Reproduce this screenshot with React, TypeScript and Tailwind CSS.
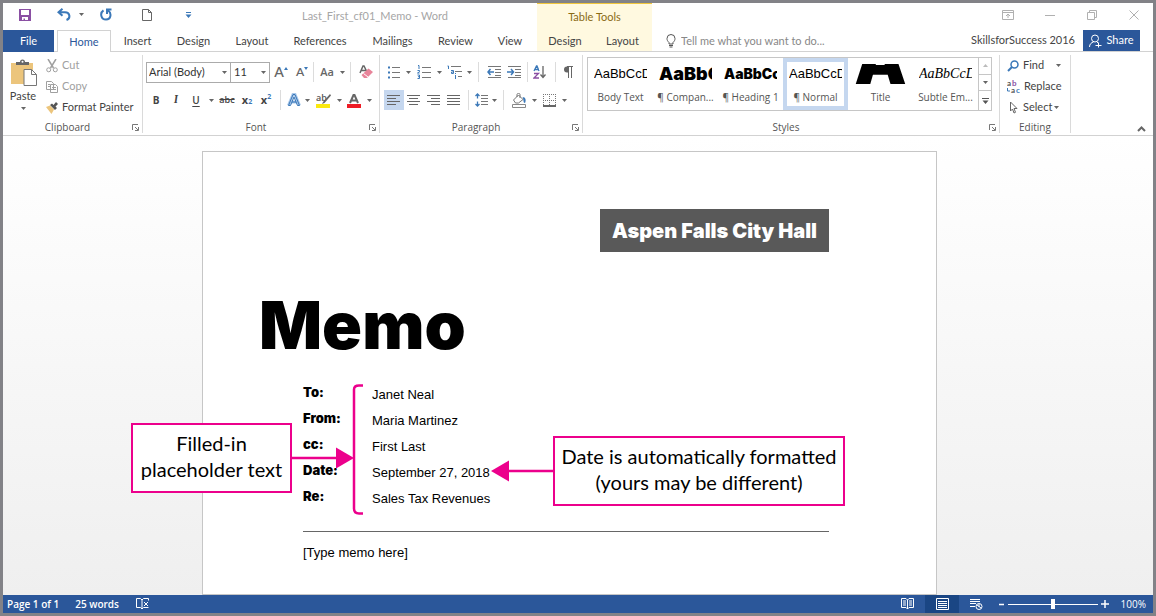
import type { ReactNode } from "react";

const cx = (...parts: (string | undefined)[]) => parts.filter(Boolean).join(" ");

function Caret({ className = "w-1.5" }: { className?: string }) {
  return (
    <span className={cx("flex shrink-0 items-center justify-center", className)}>
      <svg width="5" height="3" viewBox="0 0 5 3" aria-hidden="true">
        <path d="M0 0h5L2.5 3z" fill="#666" />
      </svg>
    </span>
  );
}

function Sep({ className }: { className: string }) {
  return (
    <span className={cx("flex h-5 shrink-0 justify-center", className)}>
      <span className="h-full w-px bg-[#dcdcdc]" />
    </span>
  );
}

function Tool({ label, className, children }: { label: string; className: string; children: ReactNode }) {
  return (
    <button type="button" aria-label={label} className={cx("flex h-5 shrink-0 items-center justify-center text-[#444]", className)}>
      {children}
    </button>
  );
}

function Group({ name, className, launcher, children }: { name: string; className: string; launcher?: boolean; children: ReactNode }) {
  return (
    <section aria-label={name} className={cx("flex shrink-0 flex-col border-r border-[#dadada]", className)}>
      <div className="h-[66px]">{children}</div>
      <div className="flex h-3 items-center font-['Open_Sans',sans-serif] text-[10px] leading-3 text-[#555]">
        <span className="grow text-center">{name}</span>
        {launcher && (
          <button type="button" aria-label={name + " options"} className="mr-[3px] block">
            <svg width="7" height="7" viewBox="0 0 7 7" fill="none" stroke="#777" aria-hidden="true">
              <path d="M.5 6V.5H6M3 3l3 3M6.5 3v3.5H3" />
            </svg>
          </button>
        )}
      </div>
    </section>
  );
}

function Lines({ rows }: { rows: [number, number][] }) {
  return (
    <svg width="14" height="12" viewBox="0 0 14 12" stroke="#666" aria-hidden="true">
      {rows.map(([a, b], i) => (
        <path key={i} d={`M${a} ${i * 3 + 1.5}H${b}`} />
      ))}
    </svg>
  );
}

const tabs = [
  { name: "Insert", w: "w-[53px]" },
  { name: "Design", w: "w-[59px]" },
  { name: "Layout", w: "w-[58px]" },
  { name: "References", w: "w-[78px]" },
  { name: "Mailings", w: "w-[67px]" },
  { name: "Review", w: "w-[59px]" },
  { name: "View", w: "w-[50px]" },
];

function Header() {
  return (
    <header className="flex h-[49px] shrink-0 text-[11px] text-[#444]">
      <div className="flex w-[534px] shrink-0 flex-col">
        <div className="flex h-[27px] items-center">
          <div className="flex items-center pb-1">
            <button type="button" aria-label="Save" className="ml-4">
              <svg width="12" height="12" viewBox="0 0 12 12" aria-hidden="true">
                <path d="M0 0h12v12H0zM2 1v5h8V1zM3 8v3h1.500V9.500H6V11h3V8z" fill="#8a4fa3" fillRule="evenodd" />
              </svg>
            </button>
            <button type="button" aria-label="Undo" className="ml-[26px]">
              <svg width="14" height="13" viewBox="0 0 14 13" fill="none" stroke="#3b78b8" strokeWidth="2" aria-hidden="true">
                <path d="M5.500 .8L1.500 4.300l4 3.500M2 4.300h6c5 0 6 6 1.500 7.700" />
              </svg>
            </button>
            <Caret className="ml-[6px] w-2" />
            <button type="button" aria-label="Redo" className="ml-[15px]">
              <svg width="12" height="13" viewBox="0 0 12 13" fill="none" stroke="#3b78b8" strokeWidth="2" aria-hidden="true">
                <path d="M3.500 2.300C-.5 5 1 11.500 6 11.500S12 5 8 2.500M7 6V1.500h4.500" />
              </svg>
            </button>
            <button type="button" aria-label="New document" className="ml-[30px]">
              <svg width="10" height="12" viewBox="0 0 10 12" fill="none" stroke="#666" aria-hidden="true">
                <path d="M.5.5h6l3 3v8h-9zM6.500.5v3h3" />
              </svg>
            </button>
            <button type="button" aria-label="Customize toolbar" className="ml-[33px]">
              <svg width="7" height="6" viewBox="0 0 7 6" fill="#3b78b8" aria-hidden="true">
                <path d="M1 0h5v1H1zM.5 2.500h6L3.500 6z" />
              </svg>
            </button>
          </div>
          <h1 className="ml-[110px] whitespace-nowrap text-[#a6a6a6]">Last_First_cf01_Memo - Word</h1>
        </div>
        <nav className="flex h-[22px] items-stretch leading-5">
          <button type="button" className="w-[51px] bg-[#2b579a] text-white">File</button>
          <span className="w-[3px] border-b border-[#d2d2d2]" />
          <button type="button" className="w-[54px] border border-b-0 border-[#d2d2d2] text-[#2b579a]">Home</button>
          {tabs.map((t) => (
            <button type="button" key={t.name} className={cx("shrink-0 border-b border-[#d2d2d2]", t.w)}>
              {t.name}
            </button>
          ))}
          <span className="grow border-b border-[#d2d2d2]" />
        </nav>
      </div>
      <div className="flex w-[115px] shrink-0 flex-col border-t border-[#f0c63c] bg-[#fff9e0]">
        <div className="flex h-[26px] items-center justify-center text-[#8a6a14]">Table Tools</div>
        <div className="flex h-[22px] border-b border-[#d2d2d2] leading-5">
          <button type="button" className="w-[56px]">Design</button>
          <button type="button" className="w-[59px]">Layout</button>
        </div>
      </div>
      <div className="flex grow flex-col">
        <div className="flex h-[27px] items-center justify-end pr-[14px] pb-1">
          <button type="button" aria-label="Ribbon display options">
            <svg width="12" height="10" viewBox="0 0 12 10" fill="none" stroke="#b0b0b0" aria-hidden="true">
              <path d="M.5.5h11v9H.5zM.5 2.500h11M6 8V4M4 6l2-2 2 2" />
            </svg>
          </button>
          <button type="button" aria-label="Minimize" className="ml-[31px]">
            <svg width="10" height="10" viewBox="0 0 10 10" stroke="#b0b0b0" aria-hidden="true"><path d="M0 5.500h10" /></svg>
          </button>
          <button type="button" aria-label="Restore" className="ml-8">
            <svg width="10" height="10" viewBox="0 0 10 10" fill="none" stroke="#b0b0b0" aria-hidden="true">
              <path d="M.5 2.500h7v7h-7zM2.500 2.500v-2h7v7h-2" />
            </svg>
          </button>
          <button type="button" aria-label="Close" className="ml-8">
            <svg width="10" height="10" viewBox="0 0 10 10" stroke="#b0b0b0" aria-hidden="true"><path d="M.5.5l9 9M9.500.5l-9 9" /></svg>
          </button>
        </div>
        <div className="flex h-[22px] items-center border-b border-[#d2d2d2]">
          <svg className="ml-[14px] shrink-0" width="10" height="14" viewBox="0 0 10 14" fill="none" stroke="#555" aria-hidden="true">
            <path d="M3 10V8.500C1.500 7 1 6 1 4.500a4 4 0 0 1 8 0C9 6 8.500 7 7 8.500V10zM3 11.500h4M3.500 13h3" />
          </svg>
          <label className="flex grow">
            <span className="sr-only">Tell me</span>
            <input className="ml-[5px] h-5 w-full bg-transparent outline-none placeholder:text-[#888]" placeholder="Tell me what you want to do..." />
          </label>
          <span className="mr-2 whitespace-nowrap">SkillsforSuccess 2016</span>
          <button type="button" className="mr-[13px] flex h-[21px] w-[57px] shrink-0 items-center justify-center gap-1 bg-[#2b579a] text-white">
            <svg width="13" height="14" viewBox="0 0 13 14" fill="none" stroke="#fff" aria-hidden="true">
              <circle cx="6" cy="4.500" r="3.500" />
              <path d="M.5 13c0-3 2-4.500 4-5M8 8l1 1M6.500 11.500h6M9.500 8.500v5" />
            </svg>
            Share
          </button>
        </div>
      </div>
    </header>
  );
}

function Clipboard() {
  const row = "flex h-[21px] items-center gap-1 whitespace-nowrap";
  return (
    <Group name="Clipboard" className="w-[140px]" launcher>
      <div className="flex text-[11px] text-[#444]">
        <button type="button" className="flex w-10 flex-col items-center pt-1">
          <svg width="27" height="28" viewBox="0 0 27 28" aria-hidden="true">
            <path d="M1 4h22v21H1z" fill="#ecc57c" />
            <path d="M6 6V3h4a2.500 2.500 0 0 1 5 0h4v3z" fill="#666" />
            <circle cx="12.500" cy="2.800" r="1" fill="#fff" />
            <path d="M14 10.500h7.500l5 5v11H14z" fill="#fff" stroke="#777" />
            <path d="M21.500 10.500v5h5" fill="none" stroke="#777" />
          </svg>
          <span className="mt-px leading-4">Paste</span>
          <Caret className="h-2 w-2" />
        </button>
        <div className="flex flex-col pl-[3px]">
          <button type="button" className={cx(row, "text-[#a0a0a0]")}>
            <svg width="12" height="14" viewBox="0 0 12 14" fill="none" stroke="#a0a0a0" aria-hidden="true">
              <path d="M2 0l5.500 9M10 0L4.500 9" strokeWidth="1.500" />
              <circle cx="2.700" cy="10.800" r="2" />
              <circle cx="9.300" cy="10.800" r="2" />
            </svg>
            Cut
          </button>
          <button type="button" className={cx(row, "text-[#a0a0a0]")}>
            <svg width="12" height="12" viewBox="0 0 12 12" fill="#fff" stroke="#a0a0a0" aria-hidden="true">
              <path d="M.5.5h5l2 2v6h-7zM4.500 3.500h5l2 2v6h-7z" />
              <path d="M2 3.500h2M2 5.500h2M6 6.500h4M6 8.500h4" />
            </svg>
            Copy
          </button>
          <button type="button" className={row}>
            <svg width="12" height="12" viewBox="0 0 12 12" aria-hidden="true">
              <path d="M0 5l4-1.500 4 4L5.500 12z" fill="#ecc57c" />
              <path d="M4 3l2-1.500L7.500 3 10 0l2 2-2.500 2.500L11 6 9 8z" fill="#555" />
            </svg>
            Format Painter
          </button>
        </div>
      </div>
    </Group>
  );
}

function FontGroup() {
  return (
    <Group name="Font" className="w-[237px]" launcher>
      <div className="flex flex-col gap-2 pt-[7px] pl-[3px] text-[11px]">
        <div className="flex h-5 items-center">
          <label className="relative flex h-[21px] w-[85px] border border-[#ababab]">
            <span className="sr-only">Font name</span>
            <select className="w-full appearance-none bg-transparent pl-0.5 text-[#333] outline-none"><option>Arial (Body)</option></select>
            <Caret className="absolute top-2 right-[3px]" />
          </label>
          <label className="relative flex h-[21px] w-[39px] border border-l-0 border-[#ababab]">
            <span className="sr-only">Font size</span>
            <select className="w-full appearance-none bg-transparent pl-[3px] text-[#333] outline-none"><option>11</option></select>
            <Caret className="absolute top-2 right-[3px]" />
          </label>
          <Tool label="Grow font" className="w-[22px] text-sm font-semibold text-[#666]">
            A<svg className="mb-2" width="4" height="3" viewBox="0 0 4 3"><path d="M0 3h4L2 0z" fill="#3b78b8" /></svg>
          </Tool>
          <Tool label="Shrink font" className="w-5 text-xs font-semibold text-[#666]">
            A<svg className="mb-2" width="4" height="3" viewBox="0 0 4 3"><path d="M0 0h4L2 3z" fill="#3b78b8" /></svg>
          </Tool>
          <Sep className="w-[3px]" />
          <Tool label="Change case" className="w-6 font-['Open_Sans',sans-serif] font-semibold text-[#666]">Aa</Tool>
          <Caret />
          <Sep className="w-2.5" />
          <Tool label="Clear formatting" className="w-[22px]">
            <svg width="14" height="14" viewBox="0 0 14 14" aria-hidden="true">
              <path d="M1 8L4 1h1l3 6M2.500 5.500h4" fill="none" stroke="#666" strokeWidth="1.500" />
              <path d="M9.500 3.500L14 7l-6 6H5L2.500 10z" fill="#e8849a" />
              <path d="M4.500 8.500L9 12" stroke="#fff" />
            </svg>
          </Tool>
        </div>
        <div className="flex h-5 items-center font-['Open_Sans',sans-serif]">
          <Tool label="Bold" className="w-5 text-[10px] font-bold">B</Tool>
          <Tool label="Italic" className="w-5 font-serif font-bold italic">I</Tool>
          <Tool label="Underline" className="w-5 text-[10px] font-semibold underline underline-offset-2">U</Tool>
          <Caret className="w-2.5" />
          <Tool label="Strikethrough" className="w-[22px] text-[9px] font-semibold line-through">abc</Tool>
          <Tool label="Subscript" className="w-[18px] font-bold">x<sub className="text-[7px] text-[#3b78b8]">2</sub></Tool>
          <Tool label="Superscript" className="w-5 font-bold">x<sup className="text-[7px] text-[#3b78b8]">2</sup></Tool>
          <Sep className="w-2" />
          <Tool label="Text effects" className="w-5">
            <svg width="14" height="14" viewBox="0 0 14 14" fill="none" aria-hidden="true">
              <path d="M1.500 12.500L6 1.500h2l4.500 11M4 9h6" stroke="#a9c8ea" strokeWidth="3" />
              <path d="M1.500 12.500L6 1.500h2l4.500 11h-2L7 4l-3.500 8.500zM5 9h4" stroke="#3b78b8" />
            </svg>
          </Tool>
          <Caret />
          <Tool label="Highlight color" className="w-[26px]">
            <svg width="15" height="15" viewBox="0 0 15 15" aria-hidden="true">
              <text x="0" y="8" fontSize="9" fontWeight="600" fill="#555">ab</text>
              <path d="M14 1L7 9l-1 2 2.500-1L15 2.500z" fill="#666" />
              <path d="M0 11h14v4H0z" fill="#fbe90e" />
            </svg>
          </Tool>
          <Caret />
          <Tool label="Font color" className="w-6">
            <svg width="14" height="15" viewBox="0 0 14 15" aria-hidden="true">
              <path d="M3 10L6.500 2h1L11 10M4.500 7.500h5" fill="none" stroke="#666" strokeWidth="2" />
              <path d="M0 11h14v4H0z" fill="#ee1c25" />
            </svg>
          </Tool>
          <Caret />
        </div>
      </div>
    </Group>
  );
}

function Paragraph() {
  return (
    <Group name="Paragraph" className="w-[203px]" launcher>
      <div className="flex flex-col gap-2 pt-[7px] pl-1">
        <div className="flex h-5 items-center">
          <Tool label="Bullets" className="w-5">
            <svg width="14" height="14" viewBox="0 0 14 14" aria-hidden="true">
              <path d="M5 2.500h8M5 7.500h8M5 12.500h8" stroke="#777" />
              <path d="M1 1.500h2v2H1zM1 6.500h2v2H1zM1 11.500h2v2H1z" fill="#3b78b8" />
            </svg>
          </Tool>
          <Caret className="w-2" />
          <Tool label="Numbering" className="w-6">
            <svg width="14" height="14" viewBox="0 0 14 14" aria-hidden="true">
              <path d="M5 2.500h9M5 7.500h9M5 12.500h9" stroke="#777" />
              <path d="M1 .5h1V4M.5 5.500h2v1.300l-2 1.200h2M.5 10h2v3.500h-2M1 11.700h1.500" fill="none" stroke="#3b78b8" />
            </svg>
          </Tool>
          <Caret />
          <Tool label="Multilevel list" className="w-6">
            <svg width="15" height="14" viewBox="0 0 15 14" aria-hidden="true">
              <path d="M4 1.500h10M8 6.500h7M11 11.500h4" stroke="#777" />
              <path d="M.5 1h1v3M4 5.500h2.500v3H4.500V7h2M8.500 10v4M8.500 8v1" fill="none" stroke="#3b78b8" />
            </svg>
          </Tool>
          <Caret />
          <Sep className="w-3" />
          <Tool label="Decrease indent" className="w-5">
            <svg width="15" height="12" viewBox="0 0 15 12" aria-hidden="true">
              <path d="M1 .5h13M8 3.500h6M8 6.500h6M8 9.500h6M1 11.500h13" stroke="#777" />
              <path d="M3.500 3L1 6l2.500 3M1 6h6" fill="none" stroke="#3b78b8" strokeWidth="1.500" />
            </svg>
          </Tool>
          <Tool label="Increase indent" className="w-5">
            <svg width="15" height="12" viewBox="0 0 15 12" aria-hidden="true">
              <path d="M1 .5h13M8 3.500h6M8 6.500h6M8 9.500h6M1 11.500h13" stroke="#777" />
              <path d="M4 3l2.500 3L4 9M0 6h6" fill="none" stroke="#3b78b8" strokeWidth="1.500" />
            </svg>
          </Tool>
          <Sep className="w-1.5" />
          <Tool label="Sort" className="w-5">
            <svg width="14" height="14" viewBox="0 0 14 14" fill="none" aria-hidden="true">
              <path d="M1 6l2.500-5h.5l2 5M2 4.500h4" stroke="#3b78b8" strokeWidth="1.300" />
              <path d="M1 8.500h4.500L1 13h5" stroke="#8a4fa3" strokeWidth="1.300" />
              <path d="M10 1v11M7.500 9.500L10 12.500l2.500-3" stroke="#666" strokeWidth="1.300" />
            </svg>
          </Tool>
          <Sep className="w-2.5" />
          <Tool label="Show formatting marks" className="w-4">
            <svg width="10" height="12" viewBox="0 0 10 12" aria-hidden="true">
              <path d="M5 .5H4a3 3 0 0 0 0 6h1z" fill="#666" />
              <path d="M4 .5h6M5.500.5V12M8.500.5V12" stroke="#666" />
            </svg>
          </Tool>
        </div>
        <div className="flex h-5 items-center">
          <Tool label="Align left" className="w-5 bg-[#c5d7ef]"><Lines rows={[[0, 13], [0, 9], [0, 13], [0, 9]]} /></Tool>
          <Tool label="Center" className="w-5"><Lines rows={[[0, 13], [2, 11], [0, 13], [2, 11]]} /></Tool>
          <Tool label="Align right" className="w-5"><Lines rows={[[0, 13], [4, 13], [0, 13], [4, 13]]} /></Tool>
          <Tool label="Justify" className="w-5"><Lines rows={[[0, 13], [0, 13], [0, 13], [0, 13]]} /></Tool>
          <Sep className="w-2" />
          <Tool label="Line spacing" className="w-[18px]">
            <svg width="13" height="14" viewBox="0 0 13 14" fill="none" aria-hidden="true">
              <path d="M6 2.500h7M6 5.500h7M6 8.500h7M6 11.500h7" stroke="#777" />
              <path d="M2.500 1v4.500M.5 3l2-2 2 2M2.500 8.500V13M.5 11l2 2 2-2" stroke="#3b78b8" strokeWidth="1.300" />
            </svg>
          </Tool>
          <Caret className="w-2" />
          <Sep className="w-2.5" />
          <Tool label="Shading" className="w-[22px]">
            <svg width="15" height="15" viewBox="0 0 15 15" fill="none" aria-hidden="true">
              <path d="M1.500 7l5-5 4.500 4.500L6.500 10h-3zM5 4V1.500C5 0 8 0 8 1.500V5" stroke="#777" />
              <path d="M10.500 4c3 0 4 3 2.500 6-2 0-1-3-2.500-6z" fill="#3b78b8" />
              <path d="M.5 11.500h13v3H.5z" stroke="#888" />
            </svg>
          </Tool>
          <Caret className="w-2" />
          <Tool label="Borders" className="w-[22px]">
            <svg width="13" height="13" viewBox="0 0 13 13" stroke="#777" aria-hidden="true">
              <path d="M0 .5h13M0 6.500h13M.5 0v12M6.500 0v12M12.500 0v12" strokeDasharray="1 1" />
              <path d="M0 12h13" strokeWidth="2" stroke="#666" />
            </svg>
          </Tool>
          <Caret className="w-2" />
        </div>
      </div>
    </Group>
  );
}

const sample = "block h-5 w-[53px] overflow-hidden whitespace-nowrap leading-5 text-black";
const heavy = "font-['Inter',sans-serif] font-black";

const styles: { name: string; selected?: boolean; preview: ReactNode }[] = [
  { name: "Body Text", preview: <span className={cx(sample, "font-['Liberation_Sans',sans-serif] text-[13px]")}>AaBbCcD</span> },
  { name: "¶ Compan...", preview: <span className={cx(sample, heavy, "text-lg leading-5")}>AaBbC</span> },
  { name: "¶ Heading 1", preview: <span className={cx(sample, heavy, "text-sm leading-5")}>AaBbCc</span> },
  { name: "¶ Normal", selected: true, preview: <span className={cx(sample, "font-['Liberation_Sans',sans-serif] text-[13px]")}>AaBbCcD</span> },
  {
    name: "Title",
    preview: (
      <span className={cx(heavy, "flex h-5 w-[52px] flex-col items-center justify-end overflow-hidden text-black")}>
        <span className="text-[66px] leading-[48px]">A</span>
      </span>
    ),
  },
  { name: "Subtle Em...", preview: <span className={cx(sample, "font-['Liberation_Serif',serif] text-sm italic text-[#444]")}>AaBbCcD</span> },
];

function StylesGroup() {
  return (
    <Group name="Styles" className="w-[417px]" launcher>
      <div className="pt-0.5 pr-[7px] pl-1">
        <div className="flex h-[54px] border border-[#c6c6c6]">
          {styles.map((s) => (
            <button
              type="button"
              key={s.name}
              className={cx(
                "flex w-[65px] shrink-0 flex-col items-center justify-center gap-[5px] border-4 font-['Open_Sans',sans-serif] text-[10px] leading-4 text-[#555]",
                s.selected ? "border-[#c5d7ef]" : "border-transparent",
              )}
            >
              {s.preview}
              <span className="whitespace-nowrap">{s.name}</span>
            </button>
          ))}
          <div className="flex grow flex-col border-l border-[#c6c6c6]">
            <button type="button" aria-label="Scroll up" className="flex grow items-center justify-center">
              <svg width="5" height="3" viewBox="0 0 5 3"><path d="M0 3h5L2.500 0z" fill="#bbb" /></svg>
            </button>
            <button type="button" aria-label="Scroll down" className="flex grow items-center justify-center border-t border-[#c6c6c6]"><Caret /></button>
            <button type="button" aria-label="More styles" className="flex grow items-center justify-center border-t border-[#c6c6c6]">
              <svg width="7" height="6" viewBox="0 0 7 6" fill="#555"><path d="M0 0h7v1H0zM.5 2.500h6L3.500 6z" /></svg>
            </button>
          </div>
        </div>
      </div>
    </Group>
  );
}

function Editing() {
  const row = "flex h-[21px] items-center gap-1 whitespace-nowrap";
  return (
    <Group name="Editing" className="w-[71px]">
      <div className="flex flex-col pl-[7px] text-[11px] text-[#444]">
        <button type="button" className={row}>
          <svg width="12" height="12" viewBox="0 0 12 12" fill="none" stroke="#3b78b8" aria-hidden="true">
            <circle cx="7.500" cy="4.500" r="3.500" strokeWidth="1.500" />
            <path d="M5 7L1 11" strokeWidth="2" />
          </svg>
          Find <Caret className="ml-1 w-3" />
        </button>
        <button type="button" className={row}>
          <svg width="13" height="14" viewBox="0 0 13 14" fontSize="8" fontWeight="700" aria-hidden="true">
            <text x="0" y="6" fill="#555">a</text>
            <text x="5" y="6" fill="#8a4fa3">b</text>
            <text x="4" y="13" fill="#555">a</text>
            <text x="9" y="13" fill="#3b78b8">c</text>
            <path d="M.5 8v3H3" fill="none" stroke="#3b78b8" />
          </svg>
          Replace
        </button>
        <button type="button" className={row}>
          <svg width="12" height="13" viewBox="0 0 12 13" fill="none" stroke="#666" aria-hidden="true">
            <path d="M3.500 1v9l2-2 1.500 4 1.500-.7L7 7.500h3z" />
          </svg>
          <span>Select</span>
          <Caret className="-ml-1 w-2" />
        </button>
      </div>
    </Group>
  );
}

const fields = [
  ["To:", "Janet Neal"],
  ["From:", "Maria Martinez"],
  ["cc:", "First Last"],
  ["Date:", "September 27, 2018"],
  ["Re:", "Sales Tax Revenues"],
];

const callout =
  "absolute flex flex-col items-center justify-center border-2 border-[#ec008c] bg-white pb-1 font-['Lato',sans-serif] text-xl leading-[26px] whitespace-nowrap text-black";

function Memo() {
  return (
    <main className="min-h-0 grow overflow-hidden bg-linear-to-b from-white to-[#efefef] pt-[15px] pr-[17px]">
      <article className="relative mx-auto min-h-full w-[735px] border border-[#c6c6c6] bg-white font-['Liberation_Sans',Arial,sans-serif] text-[13px] text-black">
        <div className="mt-[57px] mr-[107px] flex justify-end">
          <p className={cx(heavy, "flex h-[43px] w-[229px] items-center justify-center bg-[#595959] text-xl whitespace-nowrap text-white")}>
            Aspen Falls City Hall
          </p>
        </div>
        <h2 className={cx(heavy, "mt-10 ml-[56px] text-[66px] leading-[66px]")}>Memo</h2>
        <div className="mr-[107px] ml-[100px]">
          <table className="mt-[23px]">
            <tbody>
              {fields.map(([k, v]) => (
                <tr key={k} className="h-[26px]">
                  <th scope="row" className={cx(heavy, "w-[69px] pb-1 text-left align-middle leading-4")}>{k}</th>
                  <td className="pt-0.5 align-middle leading-4 whitespace-nowrap">{v}</td>
                </tr>
              ))}
            </tbody>
          </table>
          <hr className="mt-5 border-t border-[#666]" />
          <p className="mt-2 leading-[26px]">[Type memo here]</p>
        </div>

        <svg className="absolute top-[232px] left-[87px]" width="73" height="131" viewBox="0 0 73 131" fill="none" aria-hidden="true">
          <path d="M73 1.500h-4q-5 0-5 4v119q0 5 5 5h4" stroke="#ec008c" strokeWidth="2.500" />
          <path d="M0 74h48" stroke="#ec008c" strokeWidth="2.500" />
          <path d="M46 63.500L64 74 46 84.500z" fill="#ec008c" />
        </svg>
        <p className={cx(callout, "top-[271px] left-[-72px] h-[70px] w-[161px]")}>
          <span>Filled-in</span>
          <span>placeholder text</span>
        </p>
        <svg className="absolute top-[308px] left-[288px]" width="64" height="22" viewBox="0 0 64 22" aria-hidden="true">
          <path d="M16 11h48" stroke="#ec008c" strokeWidth="2.500" />
          <path d="M18 .5L0 11l18 10.500z" fill="#ec008c" />
        </svg>
        <p className={cx(callout, "top-[284px] left-[350px] h-[70px] w-[292px]")}>
          <span>Date is automatically formatted</span>
          <span>(yours may be different)</span>
        </p>
      </article>
    </main>
  );
}

function StatusBar() {
  return (
    <footer className="flex h-[18px] shrink-0 items-center bg-[#2b579a] pl-1 font-['Open_Sans',sans-serif] text-[10px] font-semibold text-white">
      <span>Page 1 of 1</span>
      <span className="ml-4">25 words</span>
      <button type="button" aria-label="Proofing" className="ml-[17px]">
        <svg width="13" height="12" viewBox="0 0 13 12" fill="none" stroke="#fff" aria-hidden="true">
          <path d="M6 2L4.500.5h-4v9h4L6 11l1.500-1.500h5M6 2v9M6 2L7.500.5h5v2M8 4l4 4M12 4L8 8" />
        </svg>
      </button>
      <span className="grow" />
      <button type="button" aria-label="Read mode" className="mr-[11px]">
        <svg width="13" height="12" viewBox="0 0 13 12" fill="none" stroke="#fff" aria-hidden="true">
          <path d="M6.500 2L5 .5H.5v9H5L6.500 11 8 9.500h4.500v-9H8zM6.500 2v9M2 3h3M2 5h3M2 7h3M8 3h3M8 5h3M8 7h3" />
        </svg>
      </button>
      <button type="button" aria-label="Print layout" className="flex h-full w-[34px] items-center justify-center bg-[#1a4684]">
        <svg width="13" height="12" viewBox="0 0 13 12" fill="none" stroke="#fff" aria-hidden="true">
          <path d="M.5.5h12v11H.5zM2 3.500h9M2 5.500h9M2 7.500h9M2 9.500h9" />
        </svg>
      </button>
      <button type="button" aria-label="Web layout" className="ml-[11px]">
        <svg width="13" height="12" viewBox="0 0 13 12" fill="none" stroke="#fff" aria-hidden="true">
          <path d="M0 1.500h10M0 3.500h10M0 5.500h6M0 8.500h5" />
          <circle cx="9" cy="8.500" r="3" />
          <path d="M7 7l4 3M9 6v3" />
        </svg>
      </button>
      <button type="button" aria-label="Zoom out" className="ml-4">
        <svg width="5" height="10" viewBox="0 0 5 10" stroke="#fff" strokeWidth="1.500"><path d="M0 5.500h5" /></svg>
      </button>
      <label className="ml-1 flex w-[90px] items-center">
        <span className="sr-only">Zoom</span>
        <input
          type="range"
          min={0}
          max={200}
          defaultValue={100}
          className="h-2.5 w-full appearance-none bg-transparent bg-[linear-gradient(#fff,#fff)] bg-[length:100%_1px] bg-center bg-no-repeat [&::-webkit-slider-thumb]:h-2.5 [&::-webkit-slider-thumb]:w-1 [&::-webkit-slider-thumb]:appearance-none [&::-webkit-slider-thumb]:bg-white"
        />
      </label>
      <button type="button" aria-label="Zoom in" className="ml-[3px]">
        <svg width="8" height="8" viewBox="0 0 8 8" stroke="#fff" strokeWidth="1.500"><path d="M0 4h8M4 0v8" /></svg>
      </button>
      <span className="w-11 pr-[7px] text-right font-normal">100%</span>
    </footer>
  );
}

export default function App() {
  return (
    <div className="flex h-screen flex-col border-[3px] border-[#828287] bg-white font-['Lato','Open_Sans',sans-serif]">
      <Header />
      <div className="flex h-[84px] shrink-0 border-b border-[#d2d2d2] pt-[3px] pb-0.5">
        <Clipboard />
        <FontGroup />
        <Paragraph />
        <StylesGroup />
        <Editing />
        <div className="flex grow items-end justify-end pr-[7px]">
          <button type="button" aria-label="Collapse the ribbon" className="pb-px">
            <svg width="9" height="6" viewBox="0 0 9 6" fill="none" stroke="#666" strokeWidth="2"><path d="M1 5l3.500-3.500L8 5" /></svg>
          </button>
        </div>
      </div>
      <Memo />
      <StatusBar />
    </div>
  );
}
